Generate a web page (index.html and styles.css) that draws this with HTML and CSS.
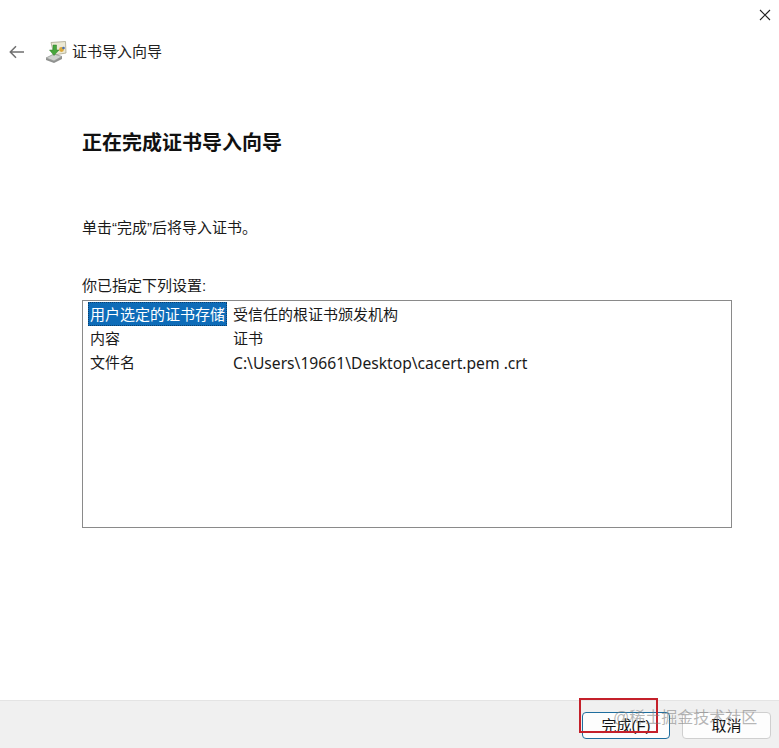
FILE: index.html
```html
<!DOCTYPE html>
<html lang="zh-CN">
<head>
<meta charset="utf-8">
<title>证书导入向导</title>
<link rel="stylesheet" href="styles.css">
</head>
<body>
<div class="window">
  <div class="titlebar">
    <svg class="close" width="12" height="12" viewBox="0 0 12 12"><path d="M1 1L11 11M11 1L1 11" stroke="#222" stroke-width="1.1" fill="none"/></svg>
  </div>
  <div class="navbar">
    <svg class="back" width="16" height="14" viewBox="0 0 16 14"><path d="M15 7H1.5M7 1.3L1.3 7L7 12.7" stroke="#6f6f6f" stroke-width="1.5" fill="none"/></svg>
    <svg class="wizard-icon" width="22" height="22" viewBox="0 0 22 22">
      <path d="M6 1.5L20.5 0.5L21 12L9 14Z" fill="#ece9d4" stroke="#a9a68e" stroke-width="0.8"/>
      <circle cx="16.5" cy="8.5" r="2.4" fill="#dca93a"/>
      <circle cx="18.5" cy="7" r="1.3" fill="#4a6fb0"/>
      <path d="M1 17L9 13L17 15.5L9 20Z" fill="#cfd2cf" stroke="#8a8c8a" stroke-width="0.7"/>
      <path d="M1 17V19L9 22L17 18V15.5L9 20Z" fill="#8f918f"/>
      <path d="M8 4H11.5V9H14L9 14.5L4.5 9H8Z" fill="#47a63c" stroke="#2f7f2a" stroke-width="0.5"/>
    </svg>
    <span class="nav-title">证书导入向导</span>
  </div>
  <main class="content">
    <h1 class="heading">正在完成证书导入向导</h1>
    <p class="intro">单击“完成”后将导入证书。</p>
    <p class="list-label">你已指定下列设置:</p>
    <div class="listbox">
      <div class="row">
        <span class="cell-name selected">用户选定的证书存储</span>
        <span class="cell-value">受信任的根证书颁发机构</span>
      </div>
      <div class="row">
        <span class="cell-name">内容</span>
        <span class="cell-value">证书</span>
      </div>
      <div class="row">
        <span class="cell-name">文件名</span>
        <span class="cell-value cell-path">C:\Users\19661\Desktop\cacert.pem .crt</span>
      </div>
    </div>
  </main>
  <footer class="footer">
    <button class="btn btn-primary">完成(F)</button>
    <button class="btn">取消</button>
  </footer>
  <div class="red-box"></div>
  <div class="watermark">@稀土掘金技术社区</div>
</div>
</body>
</html>
```
FILE: styles.css
```css
* { box-sizing: border-box; }
html, body { margin: 0; padding: 0; }
body {
  width: 779px;
  height: 748px;
  overflow: hidden;
  background: #fff;
  font-family: "Liberation Sans", "Noto Sans CJK SC", sans-serif;
  color: #1a1a1a;
}
.window {
  position: relative;
  width: 779px;
  height: 748px;
  display: flex;
  flex-direction: column;
}
.titlebar {
  height: 30px;
  display: flex;
  justify-content: flex-end;
  padding: 9px 8px 0 0;
  flex: none;
}
.navbar {
  height: 44px;
  display: flex;
  align-items: center;
  padding-left: 9px;
  flex: none;
}
.back { margin-right: 20px; }
.wizard-icon { margin-right: 5px; }
.nav-title { font-size: 15px; line-height: 20px; color: #222; }
.content {
  flex: 1;
  padding: 0 47px 0 82px;
  display: flex;
  flex-direction: column;
}
.heading {
  margin: 55px 0 0;
  font-size: 20px;
  line-height: 28px;
  font-weight: 700;
  color: #111;
}
.intro {
  margin: 61px 0 0;
  font-size: 15px;
  line-height: 20px;
}
.list-label {
  margin: 38px 0 0;
  font-size: 15px;
  line-height: 20px;
}
.listbox {
  margin-top: 4px;
  height: 228px;
  border: 1px solid #8a8a8a;
  padding: 1px 0 0 5px;
  display: flex;
  flex-direction: column;
}
.row {
  height: 24px;
  display: flex;
  align-items: flex-start;
  font-size: 15px;
  flex: none;
}
.cell-name {
  width: 139px;
  padding: 1px 0 0 2px;
  height: 24px;
  line-height: 24px;
  white-space: nowrap;
  flex: none;
}
.cell-name.selected {
  background: #0e6cb8;
  color: #fff;
  outline: 1px dotted #0a3f6e;
  outline-offset: -1px;
}
.cell-value { margin-left: 6px; padding-top: 1px; line-height: 24px; white-space: nowrap; }
.cell-path { font-family: "Noto Sans", "Liberation Sans", sans-serif; font-size: 15.65px; }
.footer {
  height: 48px;
  flex: none;
  background: #f0f0f0;
  border-top: 1px solid #e4e4e4;
  display: flex;
  justify-content: flex-end;
  align-items: flex-start;
  gap: 12px;
  padding: 11px 8px 0 0;
}
.btn {
  width: 89px;
  height: 27px;
  border: 1px solid #cfcfcf;
  border-radius: 4px;
  background: #fdfdfd;
  font-family: inherit;
  font-size: 15px;
  line-height: 20px;
  color: #111;
  padding: 0;
}
.btn-primary { width: 88px; border-color: #1f6e9e; }
.red-box {
  position: absolute;
  left: 579px;
  top: 698px;
  width: 79px;
  height: 35px;
  border: 2px solid #c4202a;
}
.watermark {
  position: absolute;
  left: 613px;
  top: 707px;
  font-size: 16px;
  line-height: 22px;
  color: rgba(120, 120, 120, 0.55);
  white-space: nowrap;
}
```
